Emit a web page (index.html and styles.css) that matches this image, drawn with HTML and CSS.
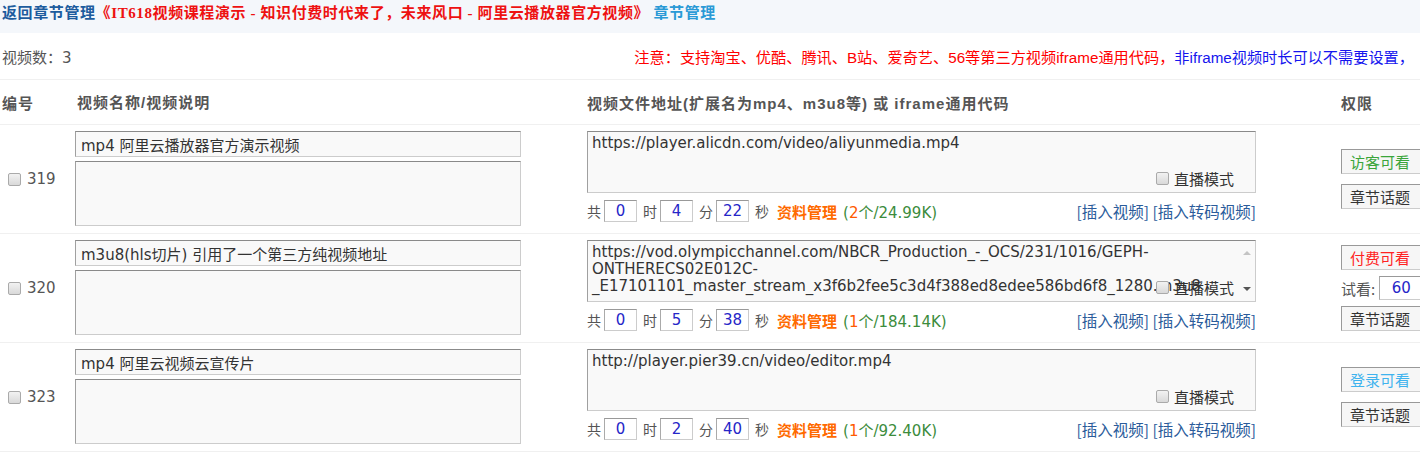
FILE: index.html
```html
<!DOCTYPE html>
<html lang="zh-CN">
<head>
    <meta charset="UTF-8">
    <title>章节视频管理</title>
    <link rel="stylesheet" href="styles.css">
</head>
<body>
    <div class="page">
        <div class="crumb">
            <a href="#" class="back">返回章节管理</a><span class="course">《IT618视频课程演示 - 知识付费时代来了，未来风口 - 阿里云播放器官方视频》</span>
            <a href="#" class="chapter">章节管理</a>
        </div>

        <div class="summary">
            <span class="count">视频数：3</span>
            <span class="notice"><span class="red">注意：支持淘宝、优酷、腾讯、B站、爱奇艺、56等第三方视频iframe通用代码，</span><span class="blue">非iframe视频时长可以不需要设置，</span></span>
        </div>

        <div class="video-list">
            <div class="row head">
                <div class="col-id">编号</div>
                <div class="col-name">视频名称/视频说明</div>
                <div class="col-url">视频文件地址(扩展名为mp4、m3u8等) 或 iframe通用代码</div>
                <div class="col-perm">权限</div>
            </div>

            <!-- 319 -->
            <div class="row">
                <label class="col-id"><input type="checkbox" class="check"> 319</label>
                <div class="col-name">
                    <input type="text" class="field title-input" value="mp4 阿里云播放器官方演示视频">
                    <textarea class="field desc-input"></textarea>
                </div>
                <div class="col-url">
                    <div class="url-box">
                        <textarea class="field url-input">https://player.alicdn.com/video/aliyunmedia.mp4</textarea>
                        <label class="live"><input type="checkbox" class="check"> 直播模式</label>
                    </div>
                    <div class="duration">
                        共<input type="text" class="num-input" value="0">时<input type="text" class="num-input" value="4">分<input type="text" class="num-input" value="22">秒
                        <a href="#" class="files">资料管理</a>
                        <span class="size">(<b>2</b>个/24.99K)</span>
                        <span class="links"><a href="#">[插入视频]</a> <a href="#">[插入转码视频]</a></span>
                    </div>
                </div>
                <div class="col-perm">
                    <button class="perm-btn guest">访客可看</button>
                    <button class="perm-btn">章节话题</button>
                </div>
            </div>

            <!-- 320 -->
            <div class="row">
                <label class="col-id"><input type="checkbox" class="check"> 320</label>
                <div class="col-name">
                    <input type="text" class="field title-input" value="m3u8(hls切片) 引用了一个第三方纯视频地址">
                    <textarea class="field desc-input"></textarea>
                </div>
                <div class="col-url">
                    <div class="url-box">
                        <textarea class="field url-input has-bar">https://vod.olympicchannel.com/NBCR_Production_-_OCS/231/1016/GEPH-ONTHERECS02E012C-_E17101101_master_stream_x3f6b2fee5c3d4f388ed8edee586bd6f8_1280.m3u8</textarea>
                        <span class="bar"><i class="up"></i><i class="down"></i></span>
                        <label class="live"><input type="checkbox" class="check"> 直播模式</label>
                    </div>
                    <div class="duration">
                        共<input type="text" class="num-input" value="0">时<input type="text" class="num-input" value="5">分<input type="text" class="num-input" value="38">秒
                        <a href="#" class="files">资料管理</a>
                        <span class="size">(<b>1</b>个/184.14K)</span>
                        <span class="links"><a href="#">[插入视频]</a> <a href="#">[插入转码视频]</a></span>
                    </div>
                </div>
                <div class="col-perm tight">
                    <button class="perm-btn paid">付费可看</button>
                    <div class="trial">试看:<input type="text" class="num-input trial-input" value="60"></div>
                    <button class="perm-btn">章节话题</button>
                </div>
            </div>

            <!-- 323 -->
            <div class="row">
                <label class="col-id"><input type="checkbox" class="check"> 323</label>
                <div class="col-name">
                    <input type="text" class="field title-input" value="mp4 阿里云视频云宣传片">
                    <textarea class="field desc-input"></textarea>
                </div>
                <div class="col-url">
                    <div class="url-box">
                        <textarea class="field url-input">http://player.pier39.cn/video/editor.mp4</textarea>
                        <label class="live"><input type="checkbox" class="check"> 直播模式</label>
                    </div>
                    <div class="duration">
                        共<input type="text" class="num-input" value="0">时<input type="text" class="num-input" value="2">分<input type="text" class="num-input" value="40">秒
                        <a href="#" class="files">资料管理</a>
                        <span class="size">(<b>1</b>个/92.40K)</span>
                        <span class="links"><a href="#">[插入视频]</a> <a href="#">[插入转码视频]</a></span>
                    </div>
                </div>
                <div class="col-perm">
                    <button class="perm-btn member">登录可看</button>
                    <button class="perm-btn">章节话题</button>
                </div>
            </div>
        </div>
    </div>
</body>
</html>
```

FILE: styles.css
```css
body {
    margin: 0;
    font-family: "DejaVu Sans", "Noto Sans CJK SC", sans-serif;
    font-size: 14px;
    color: #555;
    background: #fff;
}

a {
    text-decoration: none;
}

.page {
    width: 1420px;
    overflow: hidden;
}

/* top breadcrumb */
.crumb {
    height: 33px;
    line-height: 27px;
    padding-left: 2px;
    background: #f4f7fb;
    font-family: "Liberation Serif", "Noto Sans CJK SC", serif;
    font-size: 15px;
    font-weight: bold;
    letter-spacing: 0.6px;
    white-space: nowrap;
}

.crumb .back {
    color: #1d5c9e;
}

.crumb .course {
    color: #ee1111;
}

.crumb .chapter {
    color: #2a9ad6;
}

.summary {
    display: flex;
    align-items: center;
    height: 46px;
    padding-left: 2px;
    border-bottom: 1px solid #f0f0f0;
    font-size: 15px;
    white-space: nowrap;
}

.notice {
    margin-left: auto;
    margin-right: 6px;
    font-family: "Liberation Sans", "Noto Sans CJK SC", sans-serif;
    font-size: 15.2px;
}

.notice .red {
    color: #f00;
}

.notice .blue {
    color: #1515ee;
}

/* list */
.row {
    display: grid;
    grid-template-columns: 75px 512px 754px 1fr;
    align-items: center;
    border-bottom: 1px solid #f0f0f0;
}

.row.head {
    height: 44px;
    font-family: "Liberation Sans", "Noto Sans CJK SC", sans-serif;
    font-size: 15px;
    font-weight: bold;
    letter-spacing: 1px;
    color: #555;
}

.row.head .col-id,
.row.head .col-name {
    padding-left: 2px;
}

.row.head .col-url {
    align-self: center;
    padding: 0;
}

.col-id {
    display: flex;
    align-items: center;
    gap: 2px;
    padding-left: 8px;
    font-size: 15px;
}

.check {
    appearance: none;
    width: 13px;
    height: 13px;
    margin: 0 4px 0 0;
    border: 1px solid #aaa;
    border-radius: 2px;
    background: linear-gradient(#f2f2f2, #d9d9d9);
}

.col-name {
    display: flex;
    flex-direction: column;
    gap: 4px;
    padding: 6px 0 7px;
}

.field {
    box-sizing: border-box;
    width: 446px;
    margin: 0;
    border: 1px solid #ccc;
    border-top-color: #8a8a8a;
    border-left-color: #a0a0a0;
    background: #f9f9f9;
    font-family: "DejaVu Sans", "Noto Sans CJK SC", sans-serif;
    font-size: 15px;
    color: #333;
    outline: none;
    resize: none;
}

.title-input {
    height: 26px;
    padding: 0 5px;
}

.desc-input {
    height: 65px;
}

.col-url {
    align-self: start;
    padding-top: 6px;
}

.url-box {
    position: relative;
    width: 669px;
    height: 62px;
}

.url-input {
    width: 669px;
    height: 62px;
    padding: 3px 4px;
    line-height: 17px;
    overflow: hidden;
}

.url-input.has-bar {
    padding-right: 20px;
}

/* scrollbar arrows beside the long address */
.bar {
    position: absolute;
    top: 1px;
    right: 1px;
    bottom: 1px;
    width: 17px;
}

.bar i {
    position: absolute;
    left: 5px;
    width: 0;
    height: 0;
    border-left: 4px solid transparent;
    border-right: 4px solid transparent;
}

.bar .up {
    top: 10px;
    border-bottom: 4px solid #c4c4c4;
}

.bar .down {
    top: 46px;
    border-top: 4px solid #555;
}

.live {
    position: absolute;
    right: 22px;
    bottom: 4px;
    display: flex;
    align-items: center;
    font-family: "Noto Sans CJK SC", sans-serif;
    font-size: 15px;
    color: #333;
}

.live .check {
    margin-right: 5px;
}

.duration {
    display: flex;
    align-items: center;
    width: 669px;
    height: 22px;
    margin-top: 7px;
    font-family: "Noto Sans CJK SC", sans-serif;
    font-size: 14px;
    color: #555;
    white-space: nowrap;
}

.num-input {
    box-sizing: border-box;
    width: 33px;
    height: 22px;
    margin: 0 6px 0 3px;
    border: 1px solid #ccc;
    border-top-color: #999;
    border-left-color: #aaa;
    background: #fff;
    font-family: "DejaVu Sans", sans-serif;
    font-size: 15px;
    color: #2626c8;
    text-align: center;
    outline: none;
}

.duration .files {
    margin-left: 8px;
    font-size: 15px;
    font-weight: bold;
    color: #ff6a00;
}

.duration .size {
    margin-left: 6px;
    font-family: "DejaVu Sans", "Noto Sans CJK SC", sans-serif;
    font-size: 15px;
    color: #3c8c3c;
}

.duration .size b {
    font-weight: normal;
    color: #ff5a00;
}

.links {
    margin-left: auto;
    font-size: 15.5px;
}

.links a {
    color: #2b5c9b;
}

/* permission column */
.col-perm {
    display: flex;
    flex-direction: column;
    align-items: flex-start;
    gap: 10px;
}

.col-perm.tight {
    gap: 6px;
}

.perm-btn {
    box-sizing: border-box;
    width: 86px;
    height: 25px;
    padding: 0 0 0 8px;
    border: 1px solid #ccc;
    border-top-color: #999;
    border-left-color: #999;
    background: #f6f6f6;
    font-family: "Noto Sans CJK SC", sans-serif;
    font-size: 15px;
    color: #333;
    text-align: left;
}

.perm-btn.guest {
    color: #3aa53a;
}

.perm-btn.paid {
    color: #f22;
}

.perm-btn.member {
    color: #3fb3ee;
}

.trial {
    display: flex;
    align-items: center;
    font-family: "Noto Sans CJK SC", sans-serif;
    font-size: 15px;
    color: #555;
}

.trial-input {
    width: 44px;
    height: 24px;
    margin: 0 0 0 4px;
}
```
